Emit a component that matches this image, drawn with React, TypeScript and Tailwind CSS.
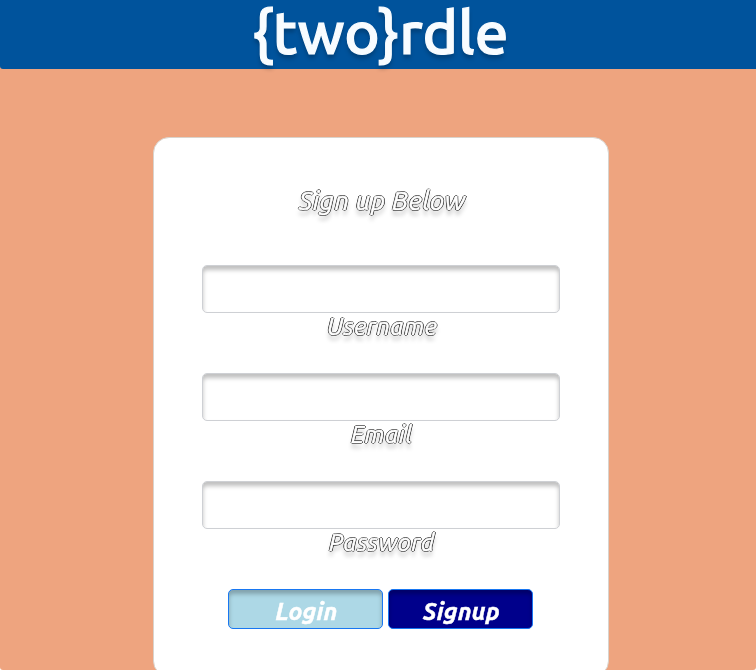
import React from 'react';

const outlined =
  'inline-block whitespace-nowrap italic text-white will-change-transform [-webkit-text-stroke:0.7px_#fff] [text-shadow:-1px_0_0_#000,1px_0_0_#000,0_-1px_0_rgba(0,0,0,0.8),0_1px_0_rgba(0,0,0,0.8),0_5px_4px_rgba(0,0,0,0.25)]';

const button =
  'h-10 rounded-[5px] border border-[#1877f2] pt-[6px] pl-[2px] text-[24px] leading-[32px] font-bold tracking-[0.2px] text-white italic will-change-transform [-webkit-text-stroke:0.5px_#fff] shadow-[inset_0_4px_4px_rgba(0,0,0,0.25)]';

function Field({ label, type }: { label: string; type: string }) {
  return (
    <label className="flex h-[108px] flex-col items-center">
      <input
        type={type}
        className="block h-12 w-[358px] shrink-0 rounded-[5px] border border-[#ced0d4] bg-white px-3 shadow-[inset_0_4px_4px_rgba(0,0,0,0.25)] outline-none"
      />
      <span className={`${outlined} pl-[2px] text-[24px] leading-[27px] tracking-[0.6px]`}>{label}</span>
    </label>
  );
}

export default function App() {
  return (
    <div className="flex h-[670px] w-[756px] flex-col overflow-hidden rounded-b-[3px] bg-[#eea47f] font-['Ubuntu','Noto_Sans',sans-serif]">
      <header className="flex h-[69px] shrink-0 justify-center rounded-bl-[3px] bg-[#00539c] pl-[5px]">
        <h1 className="h-[69px] whitespace-nowrap text-[60px] leading-[64px] font-medium tracking-[0px] text-[#f8fcff] [-webkit-text-stroke:1.2px_#f8fcff] [text-shadow:0_4px_4px_rgba(0,0,0,0.25)]">
          {'{two}rdle'}
        </h1>
      </header>
      <main className="flex justify-center pt-[68px] pl-[6px]">
        <section className="flex h-[540px] w-[456px] shrink-0 flex-col items-center rounded-[16px] border border-[#d9d3cc] bg-white pt-[47px]">
          <h2 className={`${outlined} h-[80px] pl-[2px] text-[26px] leading-[32px] tracking-[0.6px]`}>
            Sign up Below
          </h2>
          <form className="flex flex-col items-center" onSubmit={(e) => e.preventDefault()}>
            <Field label="Username" type="text" />
            <Field label="Email" type="email" />
            <Field label="Password" type="password" />
            <div className="flex gap-[5px] pr-[2px]">
              <button type="button" className={`${button} w-[155px] bg-[#add8e6]`}>
                Login
              </button>
              <button type="submit" className={`${button} w-[145px] bg-[#00008b]`}>
                Signup
              </button>
            </div>
          </form>
        </section>
      </main>
    </div>
  );
}
